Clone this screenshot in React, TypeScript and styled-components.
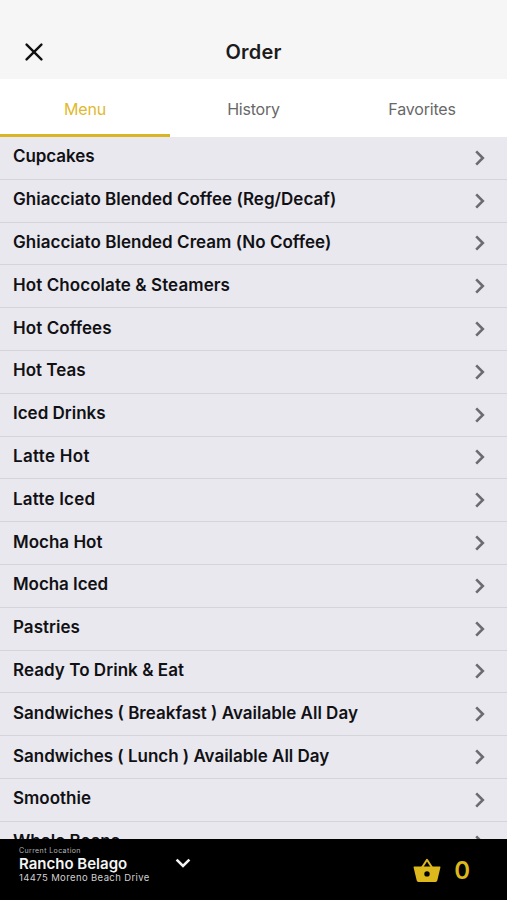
import React from 'react';
import styled, { createGlobalStyle } from 'styled-components';

const Global = createGlobalStyle`
  * { box-sizing: border-box; }
  body { margin: 0; background: #000; font-family: Inter, "Liberation Sans", sans-serif; }
`;

const Screen = styled.div`
  width: 507px;
  height: 900px;
  display: flex;
  flex-direction: column;
  overflow: hidden;
`;

const Header = styled.header`
  height: 79px;
  flex: none;
  display: grid;
  grid-template-columns: 68px 1fr 68px;
  align-items: center;
  padding-top: 25px;
  background: #f6f6f6;
`;

const CloseButton = styled.button`
  display: flex;
  justify-content: center;
  padding: 0;
  border: 0;
  background: none;
`;

const Title = styled.h1`
  margin: 0;
  text-align: center;
  font-size: 20px;
  line-height: 24px;
  font-weight: 600;
  letter-spacing: 0.2px;
  color: #1c1c1c;
`;

const Tabs = styled.nav`
  height: 58px;
  flex: none;
  display: grid;
  grid-template-columns: 170px 167px 170px;
  background: #fff;
`;

const Tab = styled.button<{ $active?: boolean }>`
  padding: 4px 0 0;
  border: 0;
  border-bottom: 3px solid ${(p) => (p.$active ? '#d9b526' : 'transparent')};
  background: none;
  font: 400 16px/20px Inter, sans-serif;
  letter-spacing: -0.2px;
  color: ${(p) => (p.$active ? '#dfb92f' : '#686868')};
`;

const List = styled.ul`
  flex: 1;
  min-height: 0;
  margin: 0;
  padding: 0;
  overflow: hidden;
  list-style: none;
  background: #e9e8ee;
`;

const Row = styled.li`
  height: 42.8px;
  display: flex;
  align-items: center;
  justify-content: space-between;
  padding: 0 21px 3px 13px;
  border-bottom: 1.5px solid #d5d4da;
`;

const RowLabel = styled.span<{ $tracking: number }>`
  font-size: 17px;
  line-height: 22px;
  font-weight: 600;
  letter-spacing: ${(p) => p.$tracking}px;
  white-space: nowrap;
  color: #111115;
`;

const RowChevron = styled.svg`
  margin-top: 3px;
`;

const Footer = styled.footer`
  height: 61px;
  flex: none;
  display: flex;
  align-items: flex-start;
  padding: 7px 37px 0 19px;
  background: #000;
`;

const Location = styled.div`
  width: 156px;
  display: flex;
  flex-direction: column;
`;

const Caption = styled.span`
  font-size: 7px;
  line-height: 9px;
  letter-spacing: 0.4px;
  color: #b4b4b4;
`;

const Place = styled.span`
  font-size: 15px;
  line-height: 17px;
  font-weight: 600;
  color: #f4f4f4;
`;

const Address = styled.span`
  font-size: 9.5px;
  line-height: 12px;
  letter-spacing: 0.38px;
  color: #d0d0d0;
`;

const DownArrow = styled.svg`
  margin-top: 12px;
`;

const Cart = styled.div`
  margin: 11px 0 0 auto;
  display: flex;
  align-items: center;
  gap: 13px;
`;

const Basket = styled.svg`
  margin-top: -3px;
`;

const Count = styled.span`
  font-size: 24px;
  line-height: 28px;
  font-weight: 600;
  color: #dcb81c;
`;

const items: [string, number][] = [
  ['Cupcakes', -0.08],
  ['Ghiacciato Blended Coffee (Reg/Decaf)', 0.02],
  ['Ghiacciato Blended Cream (No Coffee)', 0.03],
  ['Hot Chocolate & Steamers', 0.08],
  ['Hot Coffees', 0.08],
  ['Hot Teas', 0],
  ['Iced Drinks', 0],
  ['Latte Hot', 0.3],
  ['Latte Iced', 0.2],
  ['Mocha Hot', 0],
  ['Mocha Iced', -0.06],
  ['Pastries', 0.03],
  ['Ready To Drink & Eat', 0.05],
  ['Sandwiches ( Breakfast ) Available All Day', 0],
  ['Sandwiches ( Lunch ) Available All Day', -0.02],
  ['Smoothie', 0],
  ['Whole Beans', -0.08],
];

export default function App() {
  return (
    <Screen>
      <Global />
      <Header>
        <CloseButton aria-label="Close">
          <svg width="18" height="18" viewBox="0 0 18 18" fill="none" stroke="#111" strokeWidth="2.4" strokeLinecap="round">
            <path d="M1.6 1.6l14.8 14.8M16.4 1.6L1.6 16.4" />
          </svg>
        </CloseButton>
        <Title>Order</Title>
      </Header>
      <Tabs>
        <Tab $active>Menu</Tab>
        <Tab>History</Tab>
        <Tab>Favorites</Tab>
      </Tabs>
      <List>
        {items.map(([name, tracking]) => (
          <Row key={name}>
            <RowLabel $tracking={tracking}>{name}</RowLabel>
            <RowChevron width="12" height="16" viewBox="0 0 12 16" fill="none" stroke="#6c6b70" strokeWidth="2.6">
              <path d="M2.2 1.4L8.8 8L2.2 14.6" />
            </RowChevron>
          </Row>
        ))}
      </List>
      <Footer>
        <Location>
          <Caption>Current Location</Caption>
          <Place>Rancho Belago</Place>
          <Address>14475 Moreno Beach Drive</Address>
        </Location>
        <DownArrow width="16" height="10" viewBox="0 0 16 10" fill="none" stroke="#f4f4f4" strokeWidth="2.6">
          <path d="M1.6 1.6L8 8L14.4 1.6" />
        </DownArrow>
        <Cart>
          <Basket width="28" height="24" viewBox="0 0 28 24">
            <path d="M9 9.5L14 1.8L19 9.5" fill="none" stroke="#dcb81c" strokeWidth="2" strokeLinejoin="round" />
            <path
              fill="#dcb81c"
              fillRule="evenodd"
              d="M1.2 8.5H26.8Q27.6 8.5 27.4 9.5L24.3 22.6Q24 24 22.6 24H5.4Q4 24 3.7 22.6L.6 9.5Q.4 8.5 1.2 8.5zM14 13.2a2.7 2.7 0 1 0 0 5.4a2.7 2.7 0 1 0 0-5.4z"
            />
          </Basket>
          <Count>0</Count>
        </Cart>
      </Footer>
    </Screen>
  );
}
